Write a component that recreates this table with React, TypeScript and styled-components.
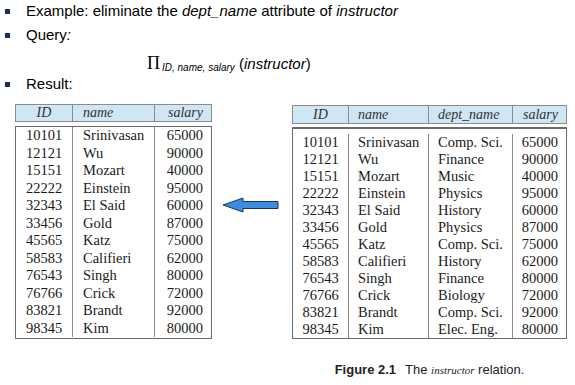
import React from "react";
import styled, { createGlobalStyle } from "styled-components";

const GlobalStyle = createGlobalStyle`
  html, body { margin: 0; padding: 0; background: #ffffff; }
  body {
    width: 575px;
    height: 385px;
    overflow: hidden;
    font-family: "Liberation Sans", Arial, sans-serif;
    color: #000;
  }
`;

const Slide = styled.div`
  display: flex;
  flex-direction: column;
  width: 575px;
  height: 385px;
`;

const BulletList = styled.ul`
  list-style: none;
  margin: 0;
  padding: 0;
  display: flex;
  flex-direction: column;
`;

const Item = styled.li<{ $gap?: number }>`
  display: flex;
  align-items: center;
  height: 22px;
  margin-top: ${(p) => p.$gap ?? 0}px;
`;

const Marker = styled.span`
  flex: none;
  width: 5px;
  height: 5px;
  background: #1f2a6b;
  margin-left: 5px;
  margin-right: 16px;
`;

const ItemText = styled.span`
  font-size: 15px;
  line-height: 22px;
  white-space: nowrap;
`;

const Em = styled.em`
  font-style: italic;
`;

const Formula = styled.li`
  height: 20px;
  line-height: 20px;
  font-size: 15px;
  padding-left: 147px;
  margin-top: 7px;
  white-space: nowrap;
`;

const Pi = styled.span`
  font-family: "Liberation Serif", "Times New Roman", serif;
  font-size: 18px;
  line-height: 20px;
`;

const Sub = styled.span`
  font-size: 10px;
  line-height: 10px;
  font-style: italic;
  vertical-align: -2px;
  margin-left: 2px;
`;

const Figure = styled.div`
  display: flex;
  align-items: flex-start;
  padding-left: 15px;
  margin-top: 9px;
`;

const TableBox = styled.div<{ $w: number; $gap: number; $top: number }>`
  width: ${(p) => p.$w}px;
  margin-top: ${(p) => p.$top}px;
  display: flex;
  flex-direction: column;
  gap: ${(p) => p.$gap}px;
`;

const HeadRow = styled.div<{ $h: number }>`
  display: flex;
  box-sizing: border-box;
  height: ${(p) => p.$h}px;
  border: 1px solid #8c8c8c;
  background: #cfe6f5;
`;

const HeadCell = styled.div<{ $w: number; $align: string; $pad: number }>`
  box-sizing: border-box;
  width: ${(p) => p.$w}px;
  display: flex;
  align-items: center;
  justify-content: ${(p) =>
    p.$align === "center" ? "center" : p.$align === "right" ? "flex-end" : "flex-start"};
  padding: 0 ${(p) => p.$pad}px;
  font-family: "Liberation Serif", "Times New Roman", serif;
  font-style: italic;
  font-size: 14px;
  color: #333;
  & + & { border-left: 1px solid #8c8c8c; }
`;

const Body = styled.div<{ $topBorder: number; $padTop: number; $padBottom: number }>`
  display: flex;
  border: 1px solid #6a6a6a;
  border-top-width: ${(p) => p.$topBorder}px;
  padding-top: ${(p) => p.$padTop}px;
  padding-bottom: ${(p) => p.$padBottom}px;
`;

const Column = styled.div<{ $w: number }>`
  box-sizing: border-box;
  width: ${(p) => p.$w}px;
  display: flex;
  flex-direction: column;
  & + & { border-left: 1px solid #8c8c8c; }
`;

const Cell = styled.div<{ $h: number; $align: string; $pad: number }>`
  height: ${(p) => p.$h}px;
  line-height: ${(p) => p.$h}px;
  font-family: "Liberation Serif", "Times New Roman", serif;
  font-size: 14.5px;
  color: #1a1a1a;
  text-align: ${(p) => p.$align};
  padding: 0 ${(p) => p.$pad}px;
  white-space: nowrap;
`;

const ArrowSlot = styled.div`
  width: 80px;
  flex: none;
  padding-left: 10px;
  margin-top: 93px;
  box-sizing: border-box;
`;

const RightColumn = styled.div`
  display: flex;
  flex-direction: column;
  align-items: center;
`;

const Caption = styled.div`
  margin-top: 23px;
  font-size: 13px;
  line-height: 16px;
  color: #222;
  white-space: nowrap;
`;

const CapBold = styled.b`
  font-weight: bold;
  margin-right: 9px;
`;

const CapItalic = styled.i`
  font-family: "Liberation Serif", "Times New Roman", serif;
  font-size: 11px;
`;

type Col = { key: string; label: string; w: number; align: "left" | "center" | "right"; pad: number };

type Row = { ID: string; name: string; dept_name: string; salary: string };

const rows: Row[] = [
  { ID: "10101", name: "Srinivasan", dept_name: "Comp. Sci.", salary: "65000" },
  { ID: "12121", name: "Wu", dept_name: "Finance", salary: "90000" },
  { ID: "15151", name: "Mozart", dept_name: "Music", salary: "40000" },
  { ID: "22222", name: "Einstein", dept_name: "Physics", salary: "95000" },
  { ID: "32343", name: "El Said", dept_name: "History", salary: "60000" },
  { ID: "33456", name: "Gold", dept_name: "Physics", salary: "87000" },
  { ID: "45565", name: "Katz", dept_name: "Comp. Sci.", salary: "75000" },
  { ID: "58583", name: "Califieri", dept_name: "History", salary: "62000" },
  { ID: "76543", name: "Singh", dept_name: "Finance", salary: "80000" },
  { ID: "76766", name: "Crick", dept_name: "Biology", salary: "72000" },
  { ID: "83821", name: "Brandt", dept_name: "Comp. Sci.", salary: "92000" },
  { ID: "98345", name: "Kim", dept_name: "Elec. Eng.", salary: "80000" },
];

const leftCols: Col[] = [
  { key: "ID", label: "ID", w: 56, align: "center", pad: 0 },
  { key: "name", label: "name", w: 82, align: "left", pad: 10 },
  { key: "salary", label: "salary", w: 57, align: "right", pad: 8 },
];

const rightCols: Col[] = [
  { key: "ID", label: "ID", w: 55, align: "center", pad: 0 },
  { key: "name", label: "name", w: 80, align: "left", pad: 9 },
  { key: "dept_name", label: "dept_name", w: 84, align: "left", pad: 9 },
  { key: "salary", label: "salary", w: 54, align: "right", pad: 8 },
];

type TableProps = {
  cols: Col[];
  width: number;
  headH: number;
  gap: number;
  top: number;
  rowH: number;
  topBorder: number;
  padTop: number;
  padBottom: number;
};

function Relation({ cols, width, headH, gap, top, rowH, topBorder, padTop, padBottom }: TableProps) {
  return (
    <TableBox $w={width} $gap={gap} $top={top}>
      <HeadRow $h={headH}>
        {cols.map((c) => (
          <HeadCell key={c.key} $w={c.w} $align={c.align} $pad={c.pad}>
            {c.label}
          </HeadCell>
        ))}
      </HeadRow>
      <Body $topBorder={topBorder} $padTop={padTop} $padBottom={padBottom}>
        {cols.map((c) => (
          <Column key={c.key} $w={c.w}>
            {rows.map((r) => (
              <Cell key={r.ID} $h={rowH} $align={c.align} $pad={c.pad}>
                {r[c.key as keyof Row]}
              </Cell>
            ))}
          </Column>
        ))}
      </Body>
    </TableBox>
  );
}

function LeftArrow() {
  return (
    <svg width="58" height="16" viewBox="0 0 58 16">
      <polygon
        points="1,8 21,1 21,4.5 56,4.5 56,11.5 21,11.5 21,15"
        fill="#3b8de4"
        stroke="#1e3552"
        strokeWidth="1"
        strokeLinejoin="miter"
      />
    </svg>
  );
}

export default function App() {
  return (
    <>
      <GlobalStyle />
      <Slide>
        <BulletList>
          <Item>
            <Marker />
            <ItemText>
              Example: eliminate the <Em>dept_name</Em> attribute of <Em>instructor</Em>
            </ItemText>
          </Item>
          <Item $gap={2}>
            <Marker />
            <ItemText>
              Query<Em>:</Em>
            </ItemText>
          </Item>
          <Formula>
            <Pi>Π</Pi>
            <Sub>ID, name, salary</Sub> (<Em>instructor</Em>)
          </Formula>
          <Item>
            <Marker />
            <ItemText>Result:</ItemText>
          </Item>
        </BulletList>
        <Figure>
          <Relation
            cols={leftCols}
            width={197}
            headH={18}
            gap={4}
            top={0}
            rowH={17.5}
            topBorder={1}
            padTop={0}
            padBottom={1}
          />
          <ArrowSlot>
            <LeftArrow />
          </ArrowSlot>
          <RightColumn>
            <Relation
              cols={rightCols}
              width={275}
              headH={19}
              gap={3}
              top={1}
              rowH={17}
              topBorder={2}
              padTop={5}
              padBottom={0}
            />
            <Caption>
              <CapBold>Figure 2.1</CapBold>The <CapItalic>instructor</CapItalic> relation.
            </Caption>
          </RightColumn>
        </Figure>
      </Slide>
    </>
  );
}
